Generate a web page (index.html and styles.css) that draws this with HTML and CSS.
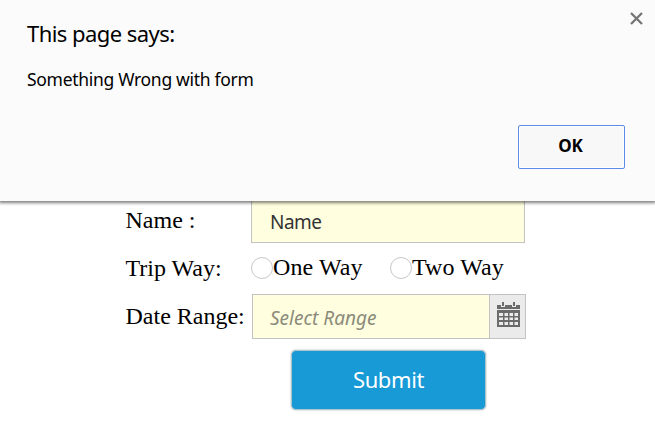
FILE: index.html
```html
<!DOCTYPE html>
<html lang="en">
<head>
<meta charset="utf-8">
<title>Trip form</title>
<link rel="stylesheet" href="styles.css">
</head>
<body>
<form class="trip-form">
  <div class="row row-name">
    <span class="label">Name :</span>
    <div class="field">Name</div>
  </div>
  <div class="row row-way">
    <span class="label">Trip Way:</span>
    <div class="choices">
      <label class="choice"><i class="radio"></i><span>One Way</span></label>
      <label class="choice"><i class="radio"></i><span>Two Way</span></label>
    </div>
  </div>
  <div class="row row-date">
    <span class="label">Date Range:</span>
    <div class="field date-field">
      <span class="placeholder">Select Range</span>
      <span class="calendar">
        <svg width="23" height="26" viewBox="0 0 23 26">
          <path fill="#6b6b6b" d="M0 3h23v4H0z"/>
          <path fill="#ebebeb" d="M4 0h4v5H4zM15 0h4v5h-4z"/>
          <path fill="#6b6b6b" d="M5 0h2v4H5zM16 0h2v4h-2z"/>
          <path fill="#6b6b6b" fill-rule="evenodd" d="M0 8h23v17H0zM2 11v3h4v-3zM7.5 11v3h3.5v-3zM12.5 11v3h3.5v-3zM17.5 11v3h3.5v-3zM2 15.500v2.500h4v-2.500zM7.500 15.500v2.500h3.500v-2.500zM12.500 15.500v2.500h3.500v-2.500zM17.500 15.500v2.500h3.500v-2.500zM2 20v3h4v-3zM7.500 20v3h3.500v-3zM12.500 20v3h3.500v-3zM17.500 20v3h3.500v-3z"/>
        </svg>
      </span>
    </div>
  </div>
  <button class="submit" type="button"><span>Submit</span></button>
</form>
<section class="dialog">
  <svg class="close" width="13" height="13" viewBox="0 0 13 13"><path d="M1 1l11 11M12 1l-11 11" stroke="#757575" stroke-width="2.3"/></svg>
  <h1 class="title"><span>This page says:</span></h1>
  <p class="message"><span>Something Wrong with form</span></p>
  <button class="ok" type="button"><span>OK</span></button>
</section>
</body>
</html>
```
FILE: styles.css
```css
* { box-sizing: border-box; }

body {
  margin: 0;
  height: 433px;
  overflow: hidden;
  position: relative;
  background: #fff;
  color: #000;
  font-family: "Noto Sans", "Open Sans", sans-serif;
}

.trip-form {
  padding: 198px 0 0 125.5px;
}

.row {
  display: grid;
  grid-template-columns: 125.5px 274px;
  font: 24px/28px "Liberation Serif", serif;
}

.row-name { height: 45px; }
.row-name .label { padding-top: 8px; }
.row-way { height: 51px; }
.row-way .label { padding-top: 11px; }
.row-date { grid-template-columns: 126.5px 274px; height: 45px; }
.row-date .label { padding-top: 8px; }
.label { white-space: nowrap; }

.field {
  height: 45px;
  padding-left: 18px;
  border: 1px solid #c3c3c3;
  background: #ffffdf;
  color: #333;
  font: 19px/47px "Noto Sans", sans-serif;
  letter-spacing: -0.5px;
}

.choices { display: flex; padding-top: 10px; }
.choice { display: flex; flex: none; width: 139px; height: 28px; white-space: nowrap; }
.choice span { letter-spacing: 0.1px; }

.radio {
  flex: none;
  width: 22px;
  height: 22px;
  margin-top: 4px;
  border: 1px solid #c8c8c8;
  border-radius: 50%;
}

.date-field {
  display: flex;
  justify-content: space-between;
  padding-left: 17px;
}

.placeholder { color: #8b8b7b; font-style: italic; letter-spacing: 0; }

.calendar {
  display: flex;
  width: 36px;
  padding: 7px 0 0 7px;
  border-left: 1px solid #c3c3c3;
  background: #ebebeb;
}

.submit {
  display: block;
  width: 195px;
  height: 60px;
  margin: 11px 0 0 165.5px;
  padding: 0;
  border: 1px solid #a9c4cf;
  border-radius: 5px;
  background: #189ad7;
  box-shadow: 0 0 2px #aaa;
  color: #fff;
  font: 22px/57px "Noto Sans", sans-serif;
  letter-spacing: -0.4px;
}

.submit span { display: block; height: 58px; line-height: 56px; }

.dialog {
  position: absolute;
  inset: 0 0 auto;
  height: 201px;
  padding: 17px 30px 0 27px;
  background: #fbfbfb;
  box-shadow: 0 1px 3px 1px rgba(0, 0, 0, 0.5);
}

.close { position: absolute; top: 12px; right: 12px; }

.title {
  margin: 0;
  font-size: 22px;
  font-weight: 400;
  line-height: 32px;
  letter-spacing: -0.55px;
}

.message {
  margin: 17px 0 0;
  font-size: 17.5px;
  line-height: 26px;
  letter-spacing: -0.3px;
}

.ok {
  display: block;
  width: 107px;
  height: 44px;
  margin: 33px 0 0 auto;
  padding: 0 2px 2px 0;
  border: 1px solid #5b8de8;
  border-radius: 2px;
  background: #f8f8f8;
  box-shadow: inset 0 0 0 1px #fff;
  color: #000;
  font: 700 17px/40px "Noto Sans", sans-serif;
}
```
